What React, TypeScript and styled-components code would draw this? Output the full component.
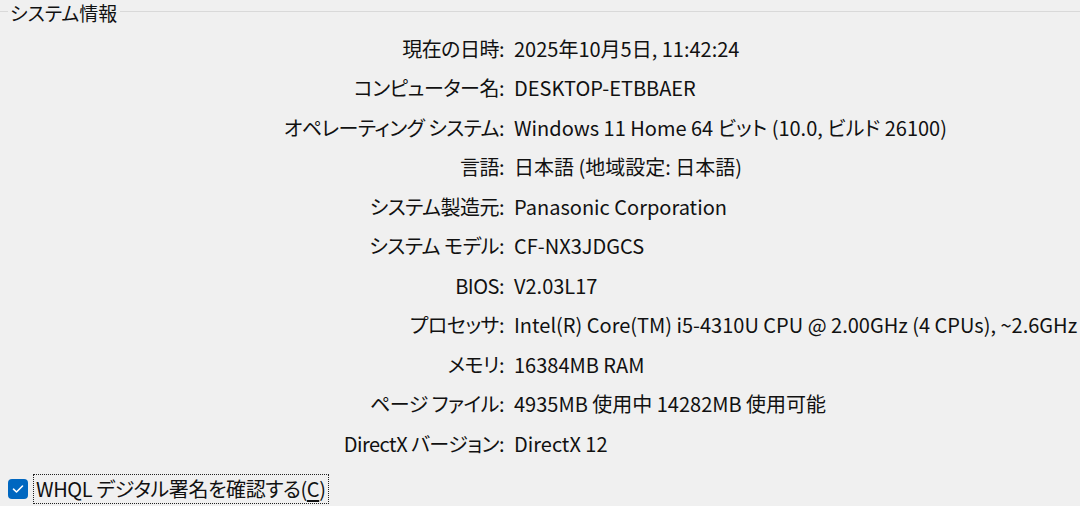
import * as React from "react";
import styled, { createGlobalStyle } from "styled-components";

const GlobalStyle = createGlobalStyle`
  html, body {
    margin: 0;
    padding: 0;
    background: #f0f0f0;
  }
  body {
    font-family: "Noto Sans CJK JP", "Noto Sans", sans-serif;
    font-feature-settings: "palt";
    color: #111;
  }
`;

const Page = styled.div`
  width: 1080px;
  height: 506px;
  overflow: hidden;
  display: flex;
  flex-direction: column;
`;

const GroupHeader = styled.div`
  display: flex;
  align-items: center;
  height: 28px;
`;

const GroupLine = styled.div<{ $grow?: boolean; $width?: number }>`
  height: 1px;
  background: #d9d9d9;
  margin-top: -6px;
  flex: ${(p) => (p.$grow ? "1" : `0 0 ${p.$width ?? 8}px`)};
`;

const GroupTitle = styled.div`
  font-size: 19px;
  line-height: 28px;
  padding: 0 3px 0 2px;
  margin-top: -2px;
`;

const InfoGrid = styled.div`
  display: grid;
  grid-template-columns: 504px 1fr;
  grid-auto-rows: 39.5px;
  column-gap: 10px;
  margin-top: 0.25px;
`;

const Label = styled.div`
  font-size: 20px;
  letter-spacing: -0.5px;
  white-space: nowrap;
  display: flex;
  align-items: center;
  justify-content: flex-end;
`;

const Value = styled.div`
  font-size: 20px;
  white-space: nowrap;
  display: flex;
  align-items: center;
`;

const CheckRow = styled.div`
  display: flex;
  align-items: center;
  margin-top: 11px;
  padding-left: 8px;
  gap: 5px;
`;

const Box = styled.div`
  width: 20px;
  height: 20px;
  border-radius: 4px;
  background: #0067c0;
  display: flex;
  align-items: center;
  justify-content: center;
`;

const CheckLabel = styled.div`
  font-size: 20px;
  letter-spacing: -0.4px;
  line-height: 26px;
  padding: 1px 2px;
  border: 1px dotted #222;
  white-space: nowrap;
`;

const Key = styled.span`
  text-decoration: underline;
  text-underline-offset: 3px;
`;

const rows: [string, string][] = [
  ["現在の日時:", "2025年10月5日, 11:42:24"],
  ["コンピューター名:", "DESKTOP-ETBBAER"],
  ["オペレーティング システム:", "Windows 11 Home 64 ビット (10.0, ビルド 26100)"],
  ["言語:", "日本語 (地域設定: 日本語)"],
  ["システム製造元:", "Panasonic Corporation"],
  ["システム モデル:", "CF-NX3JDGCS"],
  ["BIOS:", "V2.03L17"],
  ["プロセッサ:", "Intel(R) Core(TM) i5-4310U CPU @ 2.00GHz (4 CPUs), ~2.6GHz"],
  ["メモリ:", "16384MB RAM"],
  ["ページ ファイル:", "4935MB 使用中 14282MB 使用可能"],
  ["DirectX バージョン:", "DirectX 12"],
];

export default function App() {
  return (
    <Page>
      <GlobalStyle />
      <GroupHeader>
        <GroupLine $width={8} />
        <GroupTitle>システム情報</GroupTitle>
        <GroupLine $grow />
      </GroupHeader>
      <InfoGrid>
        {rows.map(([label, value]) => (
          <React.Fragment key={label}>
            <Label>{label}</Label>
            <Value>{value}</Value>
          </React.Fragment>
        ))}
      </InfoGrid>
      <CheckRow>
        <Box>
          <svg width="12" height="10" viewBox="0 0 12 10">
            <path d="M1.5 5.2 L4.5 8 L10.5 2" fill="none" stroke="#fff" strokeWidth="1.6" strokeLinecap="round" strokeLinejoin="round" />
          </svg>
        </Box>
        <CheckLabel>
          WHQL デジタル署名を確認する(<Key>C</Key>)
        </CheckLabel>
      </CheckRow>
    </Page>
  );
}
